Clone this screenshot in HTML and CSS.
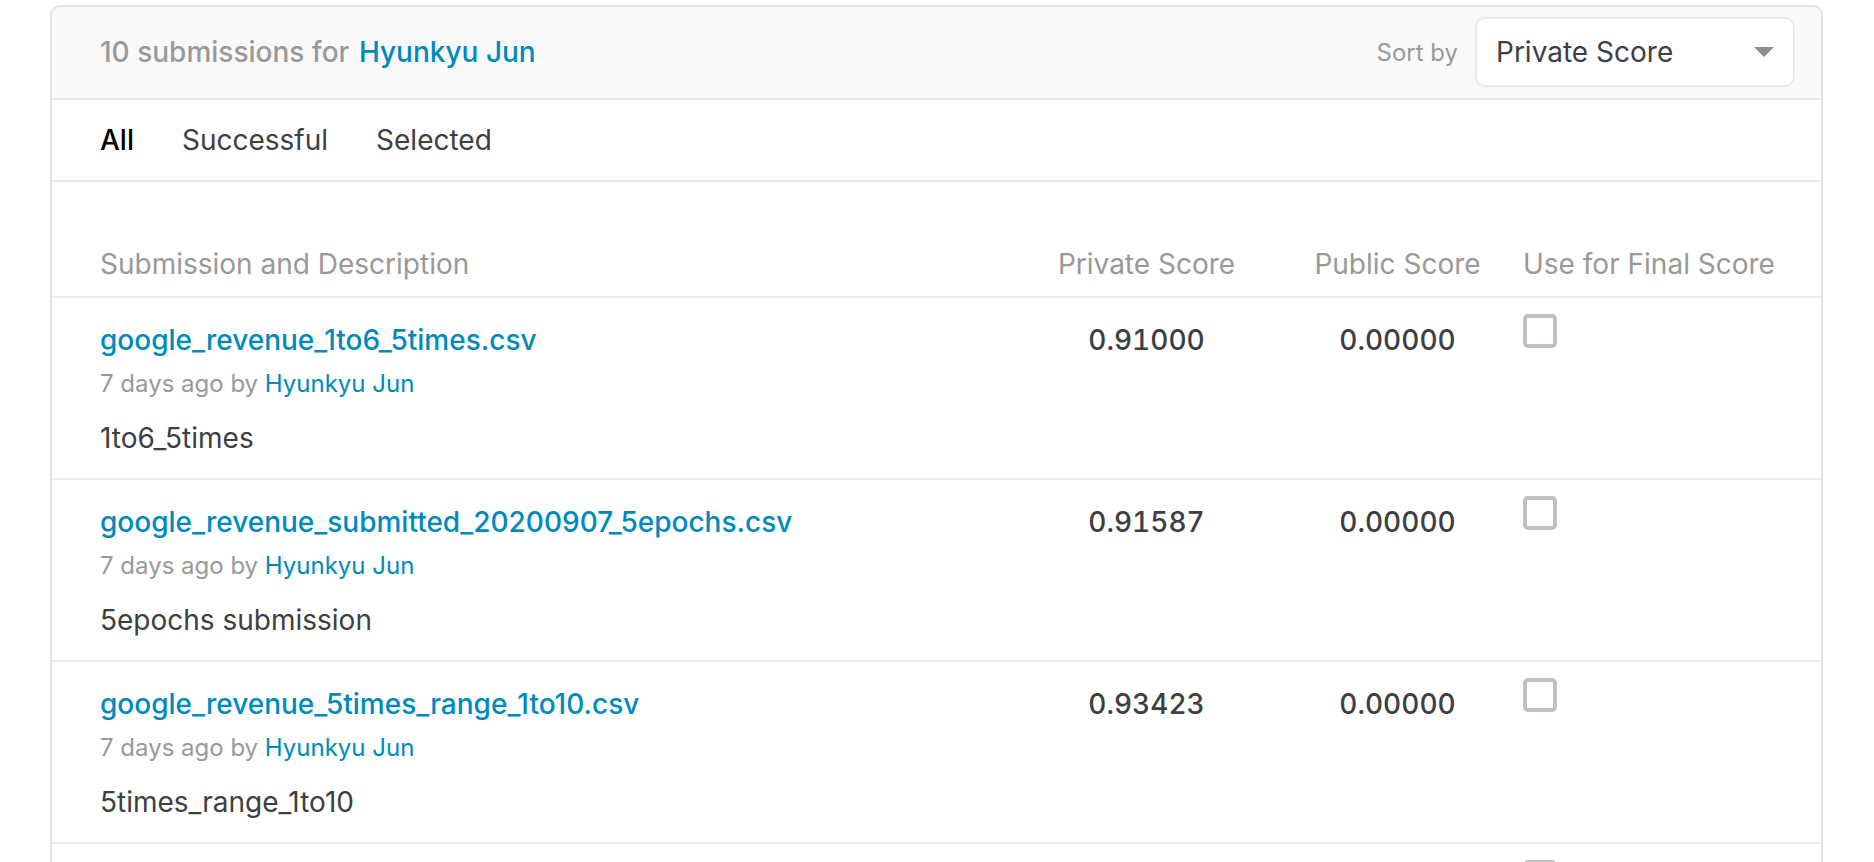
FILE: index.html
```html
<!DOCTYPE html>
<html>
<head>
<meta charset="utf-8">
<link rel="stylesheet" href="styles.css">
</head>
<body>
<div class="card">
  <div class="card-header">
    <div class="count">10 submissions for <a class="link">Hyunkyu Jun</a></div>
    <div class="sort">
      <span class="sort-label">Sort by</span>
      <div class="select">
        <span>Private Score</span>
        <svg class="caret" width="20" height="10" viewBox="0 0 20 10"><polygon points="0,0 20,0 10,10" fill="#8c8c8c"/></svg>
      </div>
    </div>
  </div>
  <div class="tabs">
    <span class="tab active">All</span>
    <span class="tab">Successful</span>
    <span class="tab">Selected</span>
  </div>
  <div class="grid col-head">
    <div>Submission and Description</div>
    <div class="center">Private Score</div>
    <div class="center">Public Score</div>
    <div>Use for Final Score</div>
  </div>
  <div class="grid row">
    <div class="info">
      <a class="title">google_revenue_1to6_5times.csv</a>
      <div class="meta">7 days ago by <a class="name">Hyunkyu Jun</a></div>
      <div class="desc">1to6_5times</div>
    </div>
    <div class="score">0.91000</div>
    <div class="score">0.00000</div>
    <div class="check-cell"><span class="checkbox"></span></div>
  </div>
  <div class="grid row">
    <div class="info">
      <a class="title">google_revenue_submitted_20200907_5epochs.csv</a>
      <div class="meta">7 days ago by <a class="name">Hyunkyu Jun</a></div>
      <div class="desc">5epochs submission</div>
    </div>
    <div class="score">0.91587</div>
    <div class="score">0.00000</div>
    <div class="check-cell"><span class="checkbox"></span></div>
  </div>
  <div class="grid row">
    <div class="info">
      <a class="title">google_revenue_5times_range_1to10.csv</a>
      <div class="meta">7 days ago by <a class="name">Hyunkyu Jun</a></div>
      <div class="desc">5times_range_1to10</div>
    </div>
    <div class="score">0.93423</div>
    <div class="score">0.00000</div>
    <div class="check-cell"><span class="checkbox"></span></div>
  </div>
  <div class="grid row">
    <div class="info">
      <a class="title">google_revenue_3times.csv</a>
      <div class="meta">7 days ago by <a class="name">Hyunkyu Jun</a></div>
      <div class="desc">3times</div>
    </div>
    <div class="score">0.94012</div>
    <div class="score">0.00000</div>
    <div class="check-cell"><span class="checkbox"></span></div>
  </div>
</div>
</body>
</html>
```
FILE: styles.css
```css
* { box-sizing: border-box; }
html, body { margin: 0; padding: 0; background: #fff; }
body {
  font-family: Inter, "Noto Sans", sans-serif;
  color: #3c4043;
  padding: 5px 51px 0 50px;
}
a { text-decoration: none; }
.card {
  border: 2px solid #e3e3e3;
  border-radius: 10px 10px 0 0;
  overflow: hidden;
}
.card-header {
  display: flex;
  align-items: center;
  justify-content: space-between;
  padding: 10px 26px 11px 48px;
  background: #f9f9f9;
  border-bottom: 2px solid #e6e6e6;
}
.count {
  font-size: 28px;
  line-height: 40px;
  color: #999;
  font-weight: 500;
}
.link { color: #008abc; margin-left: 2px; }
.sort {
  display: flex;
  align-items: center;
  gap: 17px;
}
.sort-label {
  font-size: 24px;
  color: #999;
}
.select {
  width: 320px;
  height: 70px;
  background: #fff;
  border: 2px solid #e8e8e8;
  border-radius: 10px;
  display: flex;
  align-items: center;
  justify-content: space-between;
  padding: 0 19px 0 19px;
  font-size: 28px;
  color: #3c4043;
}
.caret { display: block; }
.tabs {
  display: flex;
  gap: 48px;
  padding: 20px 48px;
  font-size: 28px;
  line-height: 40px;
  border-bottom: 2px solid #e6e6e6;
}
.tab { color: #3c4043; }
.tab.active { color: #000; font-weight: 500; }
.grid {
  display: grid;
  grid-template-columns: 1fr 251px 251px 250px;
  padding-left: 48px;
  padding-right: 48px;
}
.col-head {
  padding-top: 62px;
  padding-bottom: 12px;
  font-size: 28px;
  line-height: 40px;
  color: #999;
  white-space: nowrap;
  border-bottom: 2px solid #eeeeee;
}
.center { text-align: center; }
.row {
  padding-top: 22px;
  padding-bottom: 20px;
  border-bottom: 2px solid #eeeeee;
}
.title {
  display: block;
  font-size: 28px;
  line-height: 40px;
  font-weight: 550;
  color: #008abc;
}
.meta {
  margin-top: 4px;
  font-size: 24px;
  line-height: 40px;
  color: #999;
}
.name { color: #008abc; }
.desc {
  margin-top: 14px;
  font-size: 28px;
  line-height: 40px;
  color: #3c4043;
}
.score {
  text-align: center;
  font-size: 28px;
  line-height: 40px;
  font-weight: 550;
  font-variant-numeric: tabular-nums;
  color: #3c4043;
}
.checkbox {
  display: block;
  width: 34px;
  height: 34px;
  margin-top: -6px;
  border: 4px solid #bdc1c6;
  border-radius: 5px;
}
```
